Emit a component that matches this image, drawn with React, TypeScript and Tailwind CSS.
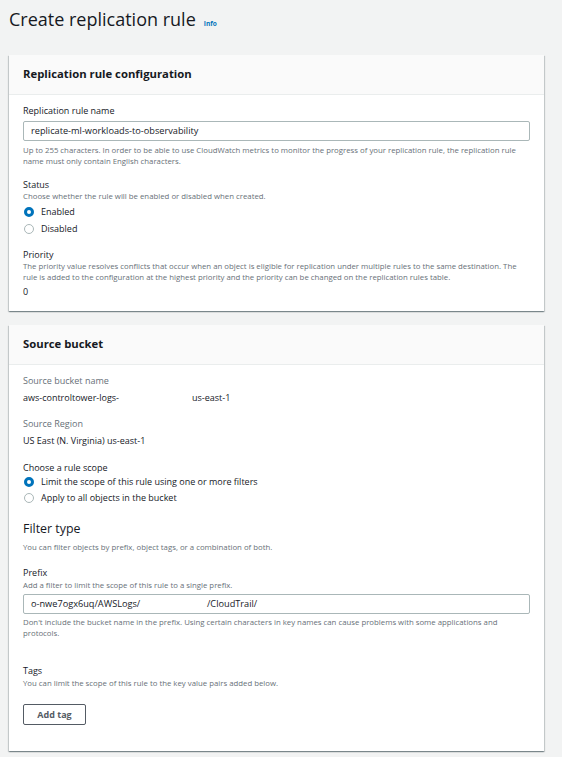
import React from 'react';

const font = { fontFamily: '"Open Sans", "Noto Sans", sans-serif' };

const Radio = ({ checked, label }: { checked: boolean; label: string }) => (
  <div className="flex items-center h-[16px]">
    <span
      className={`ml-[1px] w-[10px] h-[10px] rounded-full bg-white ${
        checked ? 'border-[3px] border-[#0073bb]' : 'border border-[#aab7b8]'
      }`}
    />
    <span className="ml-[7px] text-[9px] leading-[12px] text-[#16191f]">{label}</span>
  </div>
);

const Card = ({ title, children }: { title: string; children: React.ReactNode }) => (
  <div className="bg-white shadow-[0_1px_1px_0_rgba(0,28,36,0.3),1px_1px_1px_0_rgba(0,28,36,0.15),-1px_1px_1px_0_rgba(0,28,36,0.15)]">
    <div className="h-[40px] flex items-center px-[14px] bg-[#fafafa] border-b border-[#eaeded]">
      <h2 className="text-[11.3px] font-bold text-[#16191f]">{title}</h2>
    </div>
    <div className="px-[14px]">{children}</div>
  </div>
);

const Label = ({ children, className = '' }: { children: React.ReactNode; className?: string }) => (
  <div className={`text-[9px] leading-[12px] text-[#16191f] ${className}`}>{children}</div>
);

const Desc = ({ children, className = '' }: { children: React.ReactNode; className?: string }) => (
  <div className={`text-[7.8px] leading-[11px] text-[#687078] ${className}`}>{children}</div>
);

export default function App() {
  return (
    <div className="min-h-screen bg-[#f2f3f3] pl-[9px] pr-[18px] pb-[7px]" style={font}>
      {/* Page title */}
      <div className="pt-[5px] h-[34px] flex items-baseline">
        <h1 className="text-[18px] leading-[28px] text-[#16191f]">Create replication rule</h1>
        <a className="ml-[8px] text-[6.5px] font-bold text-[#0073bb]">Info</a>
      </div>

      <div className="mt-[21px]">
        <Card title="Replication rule configuration">
          <Label className="pt-[10px]">Replication rule name</Label>
          <div className="mt-[4px] h-[20px] border border-[#aab7b8] rounded-[2px] flex items-center px-[7px] text-[9.2px] text-[#16191f]">
            replicate-ml-workloads-to-observability
          </div>
          <Desc className="mt-[4px]">
            Up to 255 characters. In order to be able to use CloudWatch metrics to monitor the progress of your
            replication rule, the replication rule name must only contain English characters.
          </Desc>

          <Label className="mt-[12px]">Status</Label>
          <Desc className="leading-[10px]">Choose whether the rule will be enabled or disabled when created.</Desc>
          <div className="mt-[2px] flex flex-col gap-[1px]">
            <Radio checked label="Enabled" />
            <Radio checked={false} label="Disabled" />
          </div>

          <Label className="mt-[12px]">Priority</Label>
          <Desc>
            The priority value resolves conflicts that occur when an object is eligible for replication under multiple
            rules to the same destination. The rule is added to the configuration at the highest priority and the
            priority can be changed on the replication rules table.
          </Desc>
          <Label className="mt-[3px] pb-[13px]">0</Label>
        </Card>
      </div>

      <div className="mt-[14px]">
        <Card title="Source bucket">
          <Label className="pt-[10px] text-[#687078]">Source bucket name</Label>
          <Label className="mt-[5px]">
            <span className="inline-block w-[169px]">aws-controltower-logs-</span>
            <span>us-east-1</span>
          </Label>

          <Label className="mt-[14px] text-[#687078]">Source Region</Label>
          <Label className="mt-[5px]">US East (N. Virginia) us-east-1</Label>

          <Label className="mt-[15px]">Choose a rule scope</Label>
          <div className="flex flex-col">
            <Radio checked label="Limit the scope of this rule using one or more filters" />
            <Radio checked={false} label="Apply to all objects in the bucket" />
          </div>

          <div className="mt-[15px] text-[12.4px] leading-[16px] text-[#16191f]">Filter type</div>
          <Desc className="mt-[5px] leading-[10px]">
            You can filter objects by prefix, object tags, or a combination of both.
          </Desc>

          <Label className="mt-[14px]">Prefix</Label>
          <Desc className="mt-[1px] leading-[10px]">Add a filter to limit the scope of this rule to a single prefix.</Desc>
          <div className="mt-[3px] h-[20px] border border-[#aab7b8] rounded-[2px] flex items-center px-[7px] text-[9.2px] text-[#16191f]">
            <span className="inline-block w-[176px]">o-nwe7ogx6uq/AWSLogs/</span>
            <span>/CloudTrail/</span>
          </div>
          <Desc className="mt-[3px]">
            Don't include the bucket name in the prefix. Using certain characters in key names can cause problems with
            some applications and protocols.
          </Desc>

          <Label className="mt-[26px]">Tags</Label>
          <Desc className="mt-[1px] leading-[10px]">You can limit the scope of this rule to the key value pairs added below.</Desc>
          <div className="mt-[15px] pb-[26px] flex">
            <button className="h-[21px] w-[63px] border border-[#545b64] rounded-[2px] bg-white text-[9px] font-bold text-[#545b64]">
              Add tag
            </button>
          </div>
        </Card>
      </div>
    </div>
  );
}
